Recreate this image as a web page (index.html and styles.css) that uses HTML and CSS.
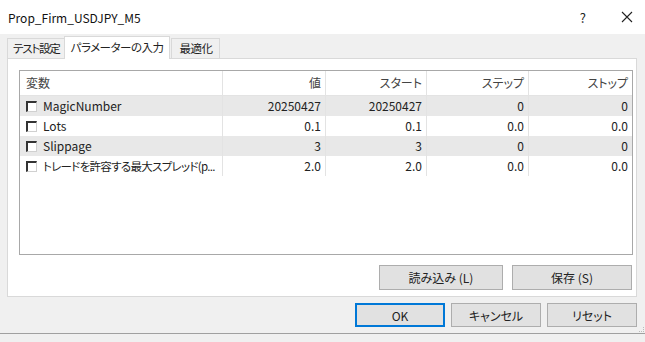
FILE: index.html
```html
<!DOCTYPE html>
<html lang="ja">
<head>
    <meta charset="UTF-8">
    <title>Prop_Firm_USDJPY_M5</title>
    <link rel="stylesheet" href="styles.css">
</head>
<body>
    <div class="window">
        <div class="titlebar">
            <span class="title">Prop_Firm_USDJPY_M5</span>
            <span class="help">?</span>
            <span class="close">
                <svg width="12" height="12" viewBox="0 0 12 12"><path d="M1 1L11 11M11 1L1 11" stroke="#222" stroke-width="1.1"/></svg>
            </span>
        </div>

        <div class="tabs">
            <div class="tab first">テスト設定</div>
            <div class="tab active">パラメーターの入力</div>
            <div class="tab last">最適化</div>
        </div>

        <div class="panel">
            <div class="list">
                <div class="row head">
                    <div class="cell name">変数</div>
                    <div class="cell">値</div>
                    <div class="cell">スタート</div>
                    <div class="cell">ステップ</div>
                    <div class="cell">ストップ</div>
                </div>
                <div class="row shade">
                    <div class="cell name"><span class="check"></span>MagicNumber</div>
                    <div class="cell">20250427</div>
                    <div class="cell">20250427</div>
                    <div class="cell">0</div>
                    <div class="cell">0</div>
                </div>
                <div class="row">
                    <div class="cell name"><span class="check"></span>Lots</div>
                    <div class="cell">0.1</div>
                    <div class="cell">0.1</div>
                    <div class="cell">0.0</div>
                    <div class="cell">0.0</div>
                </div>
                <div class="row shade">
                    <div class="cell name"><span class="check"></span>Slippage</div>
                    <div class="cell">3</div>
                    <div class="cell">3</div>
                    <div class="cell">0</div>
                    <div class="cell">0</div>
                </div>
                <div class="row">
                    <div class="cell name"><span class="check"></span><span class="jp">トレードを許容する最大スプレッド(p...</span></div>
                    <div class="cell">2.0</div>
                    <div class="cell">2.0</div>
                    <div class="cell">0.0</div>
                    <div class="cell">0.0</div>
                </div>
            </div>

            <div class="tools">
                <button class="btn load">読み込み (L)</button>
                <button class="btn save">保存 (S)</button>
            </div>
        </div>

        <div class="footer">
            <button class="btn small ok">OK</button>
            <button class="btn small">キャンセル</button>
            <button class="btn small">リセット</button>
        </div>
        <div class="grip"></div>
    </div>
</body>
</html>
```

FILE: styles.css
```css
* {
    box-sizing: border-box;
    margin: 0;
    padding: 0;
}

body {
    font-family: "Noto Sans CJK JP", "Noto Sans", sans-serif;
    font-size: 12px;
    font-feature-settings: "palt" 1;
    color: #222;
    background: #fff;
}

.window {
    width: 645px;
    height: 342px;
    background: #f0f0f0;
    position: relative;
    overflow: hidden;
}

.titlebar {
    height: 34px;
    background: #fff;
    display: flex;
    align-items: center;
    padding: 0 12px 0 8px;
}

.title {
    flex: 1;
    font-size: 12px;
    color: #111;
}

.help {
    font-size: 13px;
    color: #222;
    margin-right: 35px;
}

.close {
    display: flex;
    align-items: center;
}

.tabs {
    height: 24px;
    display: flex;
    align-items: flex-end;
    padding-left: 7px;
}

.tab {
    height: 20px;
    line-height: 18px;
    padding: 0 5px;
    border: 1px solid #d9d9d9;
    border-bottom: none;
    background: #f0f0f0;
    color: #222;
    font-size: 11.5px;
    letter-spacing: -0.5px;
    margin-right: -1px;
}

.tab.first {
    letter-spacing: -1.2px;
}

.tab.last {
    padding: 0 7px;
}

.tab.active {
    height: 23px;
    line-height: 20px;
    padding: 0 6px;
    background: #fff;
    position: relative;
    z-index: 1;
    margin: 0 1px -1px -1px;
}

.panel {
    height: 239px;
    margin: 0 8px 0 7px;
    background: #fff;
    border: 1px solid #d9d9d9;
    padding: 11px 4px 0 11px;
}

.list {
    width: 614px;
    height: 185px;
    border: 1px solid #a8a8a8;
}

.row {
    display: grid;
    grid-template-columns: 203px 103px 101px 102px 1fr;
    height: 20px;
}

.row.head {
    height: 25px;
    color: #444;
}

.row.shade {
    background: #e8e8e8;
}

.cell {
    text-align: right;
    padding-right: 4px;
    line-height: 20px;
    border-right: 1px solid #e3e3e3;
    white-space: nowrap;
    overflow: hidden;
}

.row.head .cell {
    line-height: 24px;
    border-bottom: 1px solid #e3e3e3;
}

.cell:last-child {
    border-right: none;
}

.cell.name {
    text-align: left;
    padding-left: 6px;
    display: flex;
    align-items: center;
}

.row.head .cell.name {
    display: block;
}

.jp {
    font-size: 11.5px;
    letter-spacing: -0.7px;
}

.check {
    display: inline-block;
    width: 11px;
    height: 11px;
    border-top: 2px solid #333;
    border-left: 2px solid #333;
    border-right: 1px solid #d0d0d0;
    border-bottom: 1px solid #d0d0d0;
    background: #fff;
    margin-right: 6px;
    flex-shrink: 0;
}

.tools {
    display: flex;
    justify-content: flex-end;
    gap: 9px;
    margin-top: 10px;
}

.btn {
    font-family: inherit;
    font-size: 12px;
    font-feature-settings: "palt" 1;
    color: #222;
    background: #e1e1e1;
    border: 1px solid #adadad;
    height: 25px;
}

.btn.load {
    width: 124px;
}

.btn.save {
    width: 120px;
}

.footer {
    display: flex;
    justify-content: flex-end;
    gap: 6px;
    padding: 6px 8px 0 0;
    height: 37px;
    border-bottom: 1px solid #a0a0a0;
}

.btn.small {
    width: 90px;
    height: 24px;
}

.btn.ok {
    border: 2px solid #0078d7;
}

.grip {
    position: absolute;
    right: 1px;
    bottom: 10px;
    width: 5px;
    height: 5px;
    border-right: 1px dotted #bbb;
    border-bottom: 1px dotted #bbb;
}
```
